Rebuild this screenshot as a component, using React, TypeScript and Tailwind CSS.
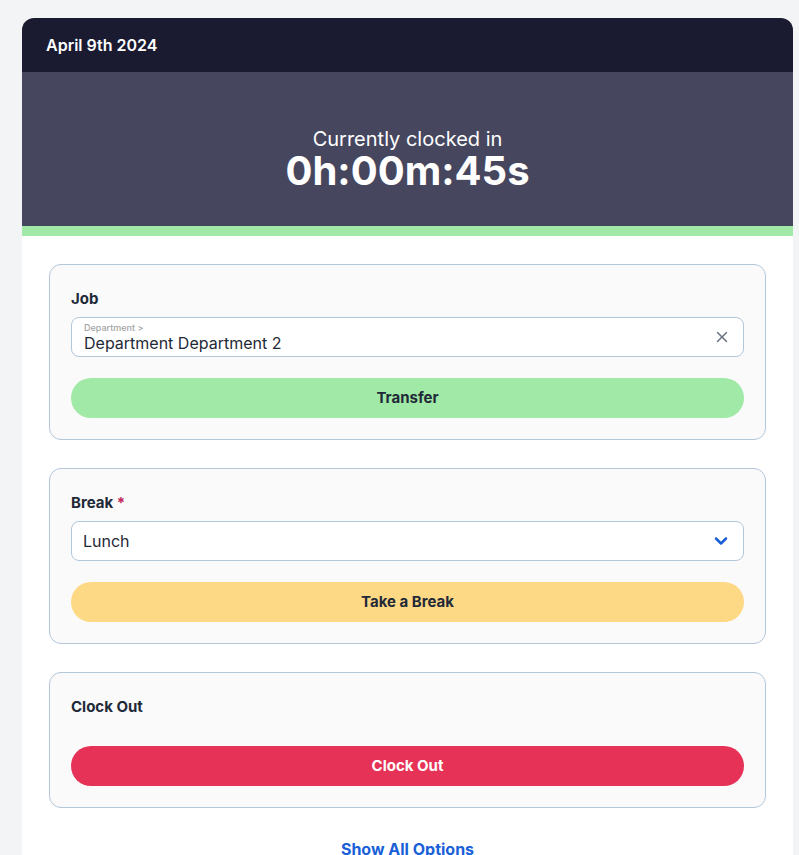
import { X, ChevronDown } from "lucide-react";

function Card({ children }: { children: React.ReactNode }) {
  return (
    <div className="rounded-[12px] border border-[#b3c7da] bg-[#fafafa] px-[21px] pt-[24px] pb-[21px]">
      {children}
    </div>
  );
}

export default function App() {
  return (
    <div className="min-h-[855px] bg-[#f3f4f6] pt-[18px] font-['Inter','Liberation_Sans',sans-serif]">
      <div className="ml-[22px] w-[771px] overflow-hidden rounded-t-[12px] bg-white">
        {/* header */}
        <div className="flex h-[54px] items-center bg-[#1a1a31] px-[24px]">
          <span className="text-[16px] font-semibold text-white">April 9th 2024</span>
        </div>

        {/* timer */}
        <div className="flex h-[154px] flex-col items-center justify-center bg-[#46475f] pt-[22px] text-white">
          <div className="text-[20px] leading-[22px]">Currently clocked in</div>
          <div className="text-[40px] font-bold leading-[42px]">0h:00m:45s</div>
        </div>
        <div className="h-[10px] bg-[#a1e9a6]" />

        <div className="flex flex-col gap-[28px] px-[27px] pt-[28px]">
          {/* job */}
          <Card>
            <div className="text-[15px] font-bold leading-[20px] text-[#1f2937]">Job</div>
            <div className="mt-[8px] flex h-[40px] items-center rounded-[8px] border border-[#b3c7da] bg-white pl-[12px] pr-[12px]">
              <div className="flex flex-1 flex-col pt-[1px]">
                <span className="text-[9px] font-medium leading-[11px] text-[#a3a3a3]">Department &gt;</span>
                <span className="text-[16px] leading-[20px] text-[#1f2937]">Department Department 2</span>
              </div>
              <X className="h-[18px] w-[18px] text-[#6b7280]" strokeWidth={2} />
            </div>
            <button className="mt-[21px] h-[40px] w-full rounded-full bg-[#a1e9a6] text-[15px] font-bold text-[#1f2937]">
              Transfer
            </button>
          </Card>

          {/* break */}
          <Card>
            <div className="text-[15px] font-bold leading-[20px] text-[#1f2937]">
              Break <span className="text-[#c0265a]">*</span>
            </div>
            <div className="mt-[8px] flex h-[40px] items-center justify-between rounded-[8px] border border-[#b3c7da] bg-white pl-[11px] pr-[12px]">
              <span className="text-[16px] text-[#1f2937]">Lunch</span>
              <ChevronDown className="h-[20px] w-[20px] text-[#1a5fd8]" strokeWidth={3} />
            </div>
            <button className="mt-[21px] h-[40px] w-full rounded-full bg-[#fed985] text-[15px] font-bold text-[#1f2937]">
              Take a Break
            </button>
          </Card>

          {/* clock out */}
          <Card>
            <div className="text-[15px] font-bold leading-[20px] text-[#1f2937]">Clock Out</div>
            <button className="mt-[29px] h-[40px] w-full rounded-full bg-[#e63257] text-[15px] font-bold text-white">
              Clock Out
            </button>
          </Card>

          <div className="pt-[1px] pb-[20px] text-center">
            <button className="text-[16px] font-bold text-[#1a5fd8]">Show All Options</button>
          </div>
        </div>
      </div>
    </div>
  );
}
